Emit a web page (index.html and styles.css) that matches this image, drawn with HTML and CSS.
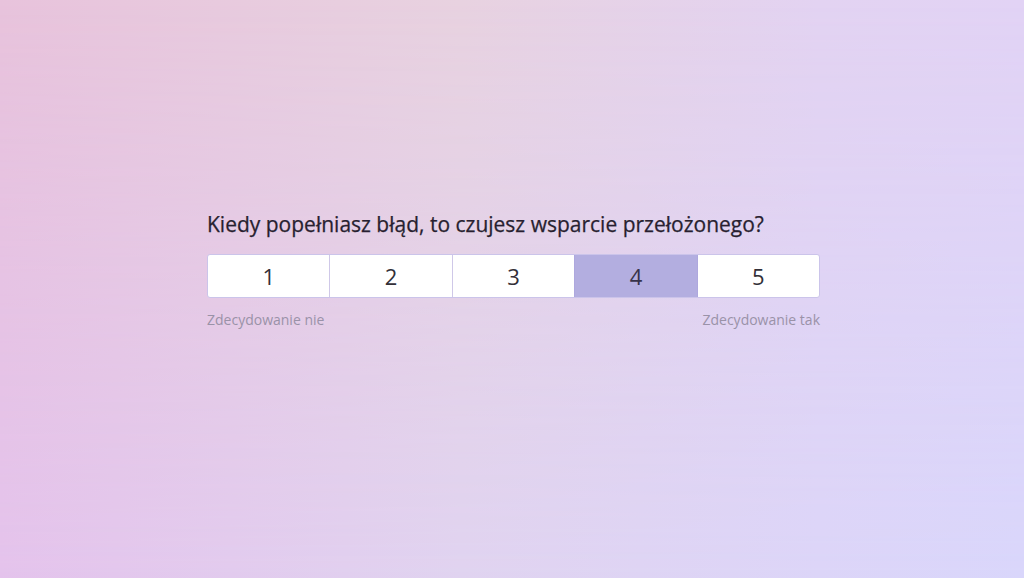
FILE: index.html
```html
<!DOCTYPE html>
<html lang="pl">
<head>
<meta charset="utf-8">
<title>Ankieta</title>
<link rel="stylesheet" href="styles.css">
</head>
<body>
<div class="page">
  <div class="question">
    <h1 class="title">Kiedy popełniasz błąd, to czujesz wsparcie przełożonego?</h1>
    <div class="scale">
      <div class="cell">1</div>
      <div class="cell">2</div>
      <div class="cell">3</div>
      <div class="cell selected">4</div>
      <div class="cell">5</div>
    </div>
    <div class="labels">
      <span>Zdecydowanie nie</span>
      <span>Zdecydowanie tak</span>
    </div>
  </div>
</div>
</body>
</html>
```

FILE: styles.css
```css
html, body {
  margin: 0;
  padding: 0;
}
body {
  font-family: "Open Sans", "Liberation Sans", sans-serif;
}
.page {
  position: relative;
  width: 1024px;
  height: 578px;
  overflow: hidden;
  background: linear-gradient(90deg, #e8c3dc 0%, #e8d2e0 45%, #e3d3f2 80%, #e2d3f5 100%);
  display: flex;
  justify-content: flex-start;
  box-sizing: border-box;
  padding-top: 210px;
  padding-left: 207px;
  z-index: 0;
}
.page::before {
  content: "";
  position: absolute;
  inset: 0;
  z-index: -1;
  background: linear-gradient(90deg, #e4c3ec 0%, #e0d3f0 45%, #dcd5f8 80%, #d9d6fb 100%);
  -webkit-mask-image: linear-gradient(180deg, transparent 0%, #000 100%);
  mask-image: linear-gradient(180deg, transparent 0%, #000 100%);
}
.question {
  width: 613px;
  display: flex;
  flex-direction: column;
}
.title {
  margin: 0;
  font-size: 21px;
  line-height: 28px;
  font-weight: 500;
  color: #281f30;
  white-space: nowrap;
  -webkit-text-stroke: 0.25px #281f30;
}
.scale {
  margin-top: 16px;
  display: flex;
  height: 44px;
  border: 1px solid #cbc4ea;
  border-radius: 3px;
  background: #fff;
  box-sizing: border-box;
  overflow: hidden;
}
.cell {
  flex: 1;
  display: flex;
  align-items: center;
  justify-content: center;
  font-size: 22px;
  color: #333038;
  border-left: 1px solid #cfc8e8;
}
.cell:first-child {
  border-left: none;
}
.cell.selected {
  background: #b3aee0;
  border-left-color: #aea8de;
  color: #37334a;
}
.cell.selected + .cell {
  border-left-color: #aea8de;
}
.labels {
  margin-top: 12px;
  display: flex;
  justify-content: space-between;
  font-size: 14px;
  line-height: 20px;
  color: #9a92a8;
}
```
